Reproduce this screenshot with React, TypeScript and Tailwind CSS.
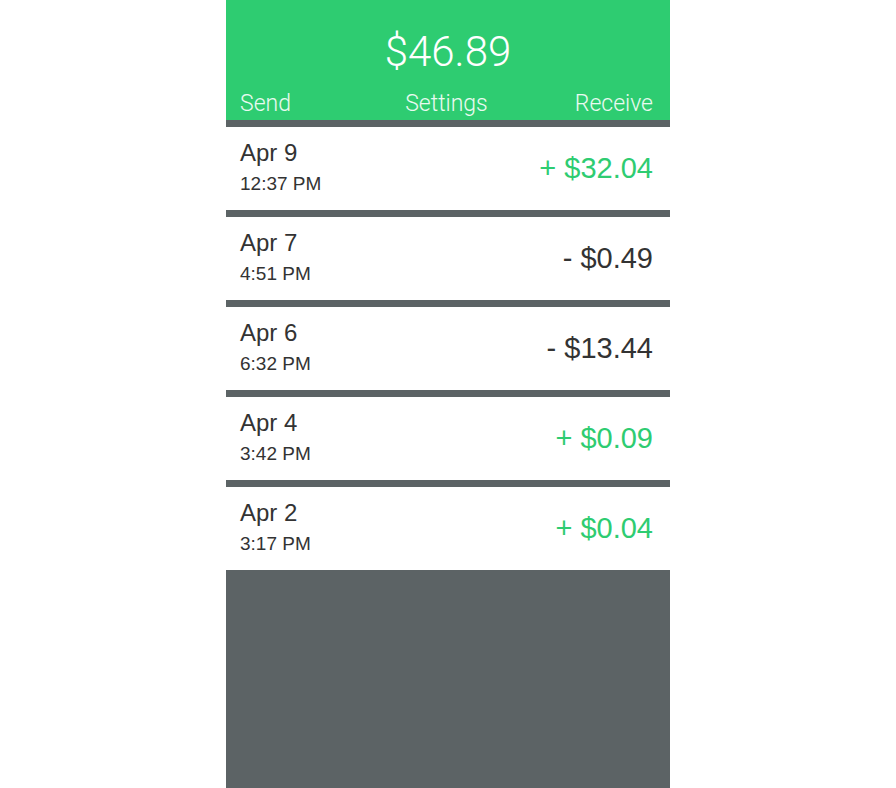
import React from 'react';

const transactions = [
  { date: 'Apr 9', time: '12:37 PM', amount: '+ $32.04', credit: true },
  { date: 'Apr 7', time: '4:51 PM', amount: '- $0.49', credit: false },
  { date: 'Apr 6', time: '6:32 PM', amount: '- $13.44', credit: false },
  { date: 'Apr 4', time: '3:42 PM', amount: '+ $0.09', credit: true },
  { date: 'Apr 2', time: '3:17 PM', amount: '+ $0.04', credit: true },
];

const App = () => {
  return (
    <div className="min-h-screen bg-white flex justify-center font-['Liberation_Sans',Arial,sans-serif]">
      <div className="w-[444px] min-h-[788px] bg-[#5c6365] flex flex-col gap-[7px]">
        <div className="h-[120px] bg-[#2ecc71] flex flex-col text-white font-['Roboto',sans-serif] font-light">
          <div className="text-center text-[42px] leading-none pt-[31px]">$46.89</div>
          <div className="grid grid-cols-3 items-end pl-[14px] pr-[17px] mt-auto pb-[5px] text-[23px] leading-none text-white/90">
            <span>Send</span>
            <span className="text-center">Settings</span>
            <span className="text-right">Receive</span>
          </div>
        </div>

        {transactions.map((t, i) => (
          <div key={i} className="h-[83px] bg-white flex items-center justify-between pl-[14px] pr-[17px]">
            <div className="flex flex-col text-[#333333] mb-[3px]">
              <span className="text-[24px] leading-none">{t.date}</span>
              <span className="text-[19px] leading-none mt-[9px]">{t.time}</span>
            </div>
            <span className={t.credit ? 'text-[29px] text-[#2ecc71]' : 'text-[29px] text-[#333333]'}>
              {t.amount}
            </span>
          </div>
        ))}
      </div>
    </div>
  );
};

export default App;
